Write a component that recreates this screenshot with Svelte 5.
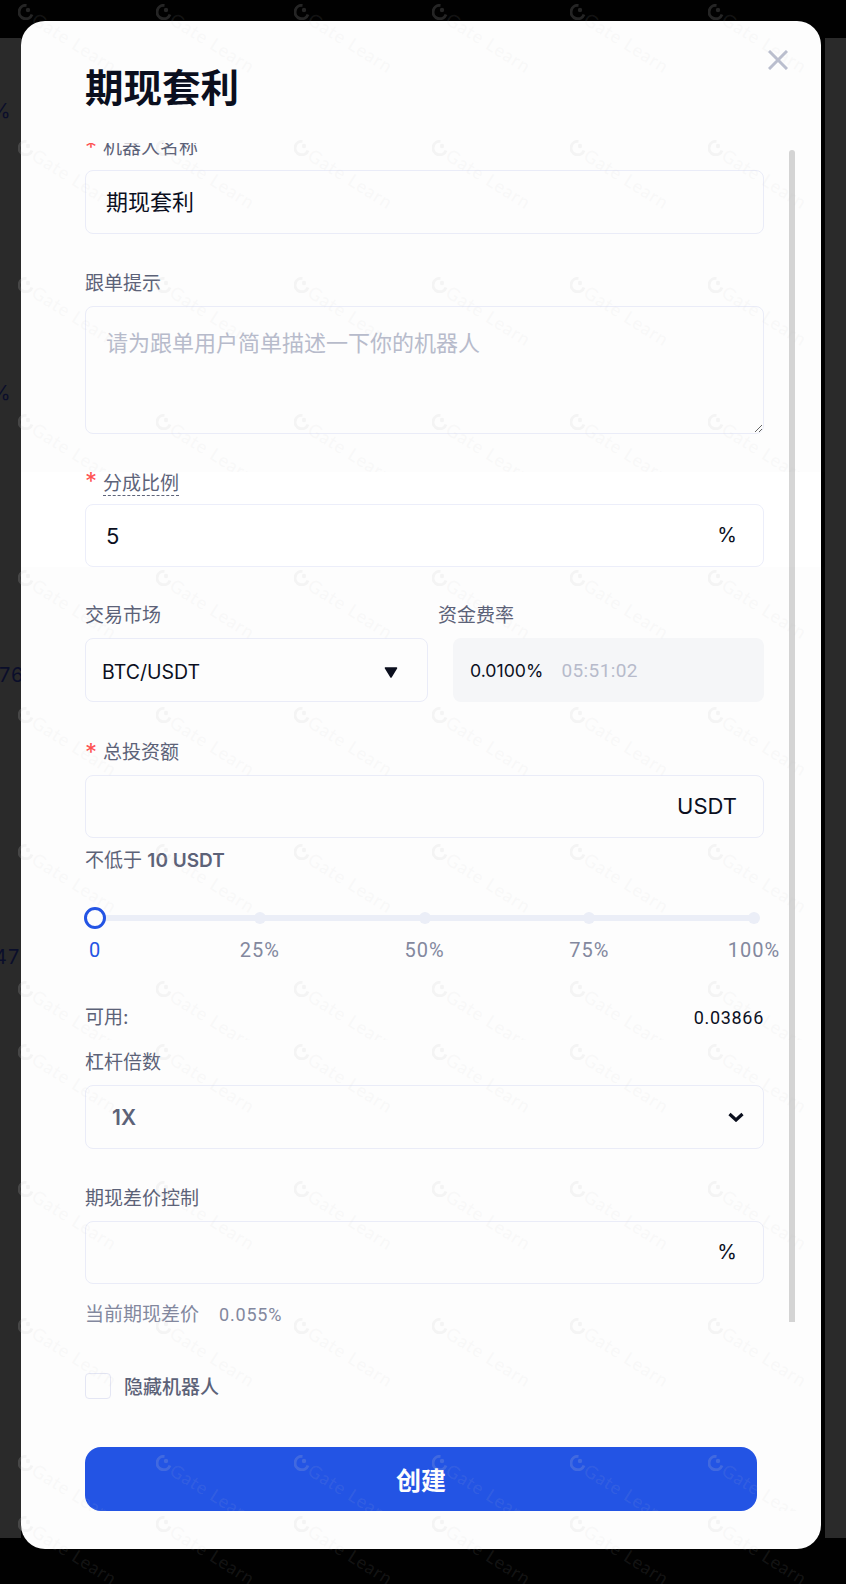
<script>
  const bands = [
    { top: 0, height: 472, tint: true, rows: [12, 148, 285, 422] },
    { top: 472, height: 95, tint: false, rows: [] },
    { top: 567, height: 473, tint: true, rows: [578, 715, 852, 989] },
    { top: 1040, height: 471, tint: true, rows: [1052, 1189, 1326, 1463] },
    { top: 1511, height: 73, tint: true, rows: [1524] }
  ]
  const cols = [25, 163, 301, 439, 577, 715]
  const stops = ['0', '25%', '50%', '75%', '100%']
</script>

<div class="page">
  <div class="backdrop">
    <span class="behind">%</span>
    <span class="behind">%</span>
    <span class="behind">76%</span>
    <span class="behind">47%</span>
  </div>

  <div class="modal">
    <button class="close" aria-label="关闭">
      <svg width="20" height="20" viewBox="0 0 20 20"><path d="M1 1l18 18M19 1L1 19" stroke="#bcc0d0" stroke-width="3" fill="none" /></svg>
    </button>
    <h1>期现套利</h1>
    <div class="scrollbar"></div>

    <div class="form">
      <div class="field first">
        <div class="label"><i>*</i>机器人名称</div>
        <input class="box cjk" value="期现套利" />
      </div>

      <div class="field">
        <div class="label">跟单提示</div>
        <textarea class="box area" placeholder="请为跟单用户简单描述一下你的机器人"></textarea>
      </div>

      <div class="field">
        <div class="label"><i>*</i><span class="dashed">分成比例</span></div>
        <div class="suffixed">
          <input class="box white" value="5" />
          <span class="suffix pct">%</span>
        </div>
      </div>

      <div class="field two">
        <div class="market">
          <div class="label">交易市场</div>
          <div class="box select">
            BTC/USDT
            <svg width="14" height="11" viewBox="0 0 14 11"><path d="M1.5 1h11L7 10z" fill="#0b0f1e" stroke="#0b0f1e" stroke-width="1.5" stroke-linejoin="round" /></svg>
          </div>
        </div>
        <div class="funding">
          <div class="label">资金费率</div>
          <div class="rate"><b>0.0100%</b><span>05:51:02</span></div>
        </div>
      </div>

      <div class="field invest">
        <div class="label"><i>*</i>总投资额</div>
        <div class="suffixed">
          <input class="box" value="" />
          <span class="suffix">USDT</span>
        </div>
        <div class="hint">不低于 <b>10 USDT</b></div>
      </div>

      <div class="slider">
        <div class="track"></div>
        {#each stops as stop, i}
          <div class="mark">
            <span class={i === 0 ? 'thumb' : 'dot'}></span>
            <span class="stop" class:on={i === 0}>{stop}</span>
          </div>
        {/each}
      </div>

      <div class="avail"><span>可用:</span><b>0.03866</b></div>

      <div class="field lever">
        <div class="label">杠杆倍数</div>
        <div class="box select wide">
          1X
          <svg width="16" height="10" viewBox="0 0 16 10"><path d="M1.5 2l6.5 6 6.5-6" stroke="#0b0f1e" stroke-width="3.2" fill="none" /></svg>
        </div>
      </div>

      <div class="field spread-field">
        <div class="label">期现差价控制</div>
        <div class="suffixed">
          <input class="box" value="" />
          <span class="suffix pct">%</span>
        </div>
        <div class="spread"><span>当前期现差价</span><span>0.055%</span></div>
      </div>

      <label class="check">
        <span class="tick"></span>
        隐藏机器人
      </label>
    </div>

    <button class="create">创建</button>
  </div>

  <div class="marks-layer" aria-hidden="true">
    {#each bands as band}
      <div class="band" class:tint={band.tint} style="top:{band.top}px;height:{band.height}px">
        {#each band.rows as y}
          {#each cols as x}
            <div class="wm" style="left:{x - 7}px;top:{y - band.top - 8}px">
              <svg width="16" height="16" viewBox="0 0 16 16">
                <path d="M14 10.5A6.7 6.7 0 1 1 8.5 1.4" stroke="currentColor" stroke-width="3" fill="none" />
                <circle cx="10" cy="6" r="2.2" fill="currentColor" />
              </svg>
              <span>Gate Learn</span>
            </div>
          {/each}
        {/each}
      </div>
    {/each}
  </div>
</div>

<style>
  :global(body) {
    background: #000;
    font-family: Inter, 'Noto Sans CJK SC', sans-serif;
  }
  .page {
    position: relative;
    width: 846px;
    height: 1584px;
    overflow: hidden;
    background: #000;
  }
  .backdrop {
    box-sizing: border-box;
    height: 1500px;
    position: relative;
    top: 38px;
    background: #2a2a2a;
    padding-top: 61px;
    display: flex;
    flex-direction: column;
    width: 21px;
    box-shadow: 825px 0 0 #2a2a2a;
  }
  .behind {
    height: 282px;
    line-height: 24px;
    font-size: 20px;
    letter-spacing: 1px;
    color: #0a0e2a;
    white-space: nowrap;
  }
  .behind:nth-child(1), .behind:nth-child(2) {
    margin-left: -9px;
  }
  .behind:nth-child(3) {
    margin-left: -1px;
  }
  .behind:nth-child(4) {
    margin-left: -6px;
  }
  .modal {
    position: absolute;
    left: 21px;
    top: 21px;
    width: 800px;
    height: 1528px;
    box-sizing: border-box;
    padding: 0 57px 0 64px;
    background: #fff;
    border-radius: 24px;
    color: #0b0f1e;
  }
  h1 {
    margin: 0;
    height: 122px;
    box-sizing: border-box;
    padding-top: 42px;
    font-size: 38.5px;
    line-height: 50px;
    font-weight: 700;
    color: #0b0f1e;
  }
  .close {
    position: absolute;
    top: 29px;
    right: 33px;
    padding: 0;
    border: 0;
    background: none;
    line-height: 0;
  }
  .scrollbar {
    position: absolute;
    left: 768px;
    top: 129px;
    width: 6px;
    height: 1172px;
    border-radius: 3px 3px 0 0;
    background: #d6d6d6;
  }
  .form {
    display: flow-root;
    clip-path: inset(0 -40px 0 -40px);
    height: 1280px;
  }
  .field {
    margin-bottom: 36px;
  }
  .first {
    margin-top: -7px;
    margin-bottom: 38px;
  }
  .invest {
    margin-top: 39px;
    margin-bottom: 0;
  }
  .label {
    height: 24px;
    line-height: 24px;
    margin-bottom: 10px;
    font-size: 19px;
    color: #5d6379;
    white-space: nowrap;
  }
  .label i {
    display: inline-block;
    width: 18px;
    font-style: normal;
    color: #ff5252;
    font-size: 24px;
    line-height: 24px;
    vertical-align: top;
  }
  .dashed {
    display: inline-block;
    margin-top: 2px;
    line-height: 23px;
    border-bottom: 1px dashed #5d6379;
  }
  .box {
    display: block;
    width: 100%;
    height: 64px;
    box-sizing: border-box;
    padding: 0 20px;
    border: 1px solid #eceefa;
    border-radius: 8px;
    background: transparent;
    font: inherit;
    font-size: 22px;
    color: #0b0f1e;
    outline: none;
  }
  .cjk {
    padding-bottom: 4px;
  }
  .white {
    background: #fff;
  }
  .area {
    height: 128px;
    padding: 18px 20px 20px;
    line-height: 36px;
  }
  .area::placeholder {
    color: #b9bdcd;
  }
  .suffixed {
    position: relative;
    height: 64px;
  }
  .suffixed .box {
    height: 63px;
  }
  .suffix {
    position: absolute;
    right: 27px;
    top: 0;
    line-height: 63px;
    font-size: 22px;
    color: #0b0f1e;
  }
  .pct {
    font-size: 20px;
  }
  .two {
    display: flex;
    gap: 10px;
    margin-bottom: 0;
  }
  .market {
    width: 343px;
  }
  .funding {
    flex: 1;
    min-width: 0;
  }
  .select {
    display: flex;
    align-items: center;
    justify-content: space-between;
    padding: 4px 29px 0 16px;
    font-size: 19.5px;
  }
  .wide {
    padding: 0 19px 0 26px;
    font-size: 21px;
    font-weight: 600;
    color: #5d6379;
  }
  .rate {
    height: 64px;
    margin-left: 15px;
    display: flex;
    align-items: center;
    gap: 18px;
    padding-left: 17px;
    border-radius: 8px;
    background: #f7f8fa;
    font-size: 18px;
    color: #0b0f1e;
  }
  .rate b {
    font-weight: 400;
    font-size: 17.7px;
  }
  .rate span {
    font-family: Roboto, sans-serif;
    font-size: 19px;
    letter-spacing: 0.4px;
    color: #b9bdcd;
  }
  .hint {
    margin-top: 10px;
    height: 24px;
    line-height: 24px;
    font-size: 19px;
    color: #5d6379;
  }
  .hint b {
    font-weight: 600;
  }
  .slider {
    position: relative;
    display: flex;
    justify-content: space-between;
    margin: 34px 10px 0;
    height: 55px;
  }
  .track {
    position: absolute;
    left: 0;
    right: 0;
    top: 8px;
    height: 6px;
    background: #edf0f9;
  }
  .mark {
    position: relative;
    width: 0;
    display: flex;
    flex-direction: column;
    align-items: center;
  }
  .dot, .thumb {
    flex: none;
    box-sizing: border-box;
    height: 22px;
    width: 22px;
  }
  .dot {
    width: 12px;
    height: 12px;
    margin: 5px 0;
    border-radius: 50%;
    background: #edf0f9;
  }
  .thumb {
    border-radius: 50%;
    border: 3.5px solid #2354e6;
    background: #fff;
  }
  .stop {
    margin-top: 9px;
    line-height: 24px;
    font-family: Roboto, sans-serif;
    font-size: 20px;
    letter-spacing: 1px;
    color: #84899f;
    white-space: nowrap;
  }
  .stop.on {
    color: #2354e6;
  }
  .avail {
    margin-top: 44px;
    display: flex;
    justify-content: space-between;
    height: 24px;
    line-height: 24px;
    font-size: 19px;
    color: #5d6379;
  }
  .avail b {
    font-family: Roboto, sans-serif;
    font-size: 18px;
    letter-spacing: 0.7px;
    font-weight: 400;
    color: #0b0f1e;
  }
  .lever {
    margin-top: 21px;
    margin-bottom: 38px;
  }
  .spread-field {
    margin-bottom: 0;
  }
  .spread {
    margin-top: 18px;
    display: flex;
    gap: 20px;
    line-height: 24px;
    font-size: 19px;
    color: #84899f;
  }
  .spread span:last-child {
    font-family: Roboto, sans-serif;
    font-size: 18px;
    letter-spacing: 0.8px;
  }
  .check {
    margin-top: 45px;
    display: flex;
    align-items: center;
    gap: 13px;
    font-size: 19px;
    font-weight: 500;
    color: #5d6379;
  }
  .tick {
    width: 26px;
    height: 26px;
    box-sizing: border-box;
    border: 1px solid #e6e8f6;
    border-radius: 4px;
  }
  .create {
    position: absolute;
    left: 64px;
    top: 1426px;
    width: 672px;
    height: 64px;
    border: 0;
    border-radius: 16px;
    background: #2354e6;
    color: #fff;
    font: inherit;
    font-size: 25px;
    font-weight: 600;
  }
  .marks-layer {
    position: absolute;
    inset: 0;
    pointer-events: none;
  }
  .band {
    position: absolute;
    left: 0;
    width: 100%;
    overflow: hidden;
  }
  .tint {
    background: rgba(60, 60, 90, 0.012);
  }
  .wm {
    position: absolute;
    color: rgba(205, 205, 205, 0.18);
    display: flex;
    align-items: flex-start;
  }
  .wm svg {
    flex: none;
  }
  .wm span {
    position: absolute;
    left: 16px;
    top: 3px;
    font-family: Lato, sans-serif;
    font-size: 18px;
    line-height: 20px;
    letter-spacing: 1px;
    white-space: nowrap;
    opacity: 0.55;
    transform: rotate(32deg);
    transform-origin: 0 50%;
  }
</style>
